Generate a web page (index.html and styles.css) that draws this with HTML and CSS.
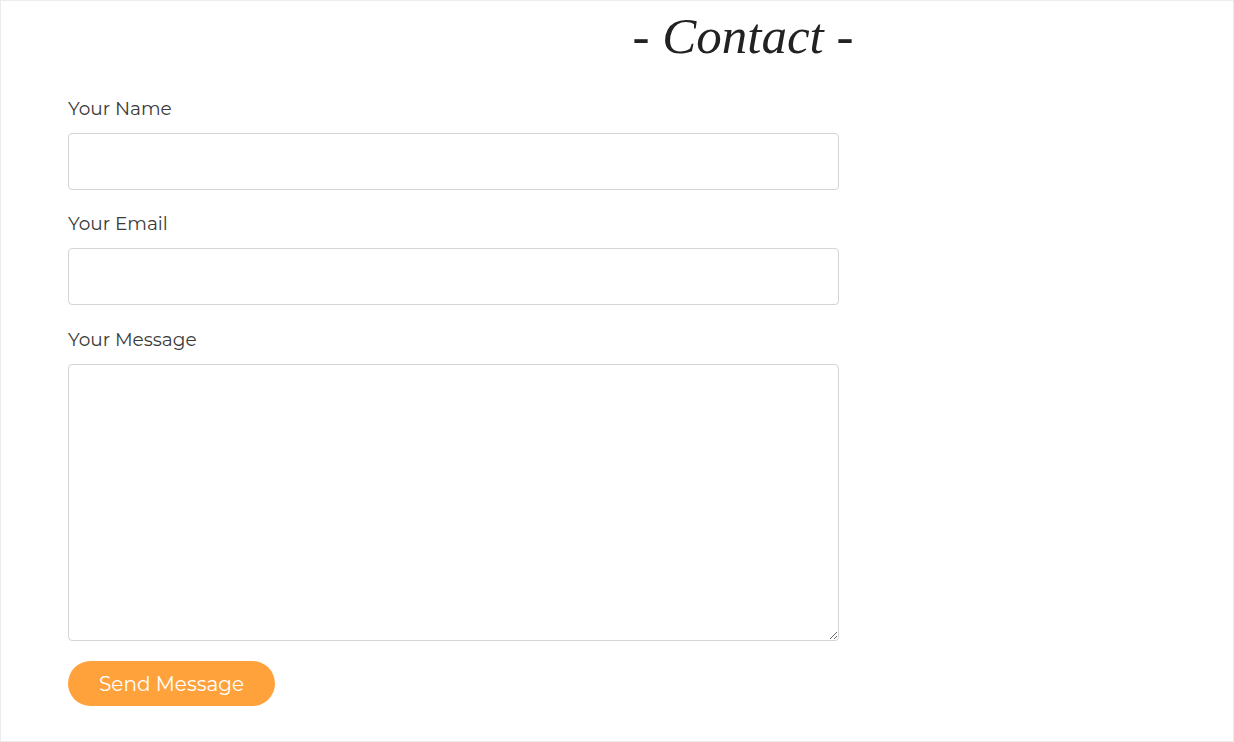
FILE: index.html
```html
<!DOCTYPE html>
<html lang="en">
<head>
<meta charset="utf-8">
<title>Contact</title>
<link rel="stylesheet" href="styles.css">
</head>
<body>
<div class="page">
  <h1 class="title">- Contact -</h1>
  <form class="form">
    <label class="field">
      <span class="label">Your Name</span>
      <input class="input" type="text">
    </label>
    <label class="field">
      <span class="label">Your Email</span>
      <input class="input" type="email">
    </label>
    <label class="field">
      <span class="label">Your Message</span>
      <textarea class="textarea"></textarea>
    </label>
    <button class="btn" type="button">Send Message</button>
  </form>
</div>
</body>
</html>
```
FILE: styles.css
```css
* { box-sizing: border-box; }
html, body { margin: 0; padding: 0; background: #fff; }
.page {
  width: 1234px;
  height: 742px;
  border: 1px solid #ececec;
  font-family: Montserrat, "Open Sans", "Noto Sans", sans-serif;
  color: #333;
  overflow: hidden;
}
.title {
  margin: 0;
  padding: 5px 0 0 252px;
  text-align: center;
  font-family: "Liberation Serif", serif;
  font-style: italic;
  font-weight: normal;
  font-size: 51px;
  line-height: 60px;
  color: #222;
}
.form {
  padding: 31px 0 0 67px;
  width: 838px;
  display: flex;
  flex-direction: column;
}
.field {
  display: flex;
  flex-direction: column;
  margin-bottom: 23px;
}
.field:first-child { margin-bottom: 22px; }
.label {
  font-size: 18.5px;
  line-height: 24px;
  color: #3a3a3a;
  margin-bottom: 12px;
}
.input, .textarea {
  width: 771px;
  border: 1px solid #d4d4d4;
  border-radius: 4px;
  background: #fff;
  font: inherit;
}
.input { height: 57px; }
.textarea { height: 277px; resize: vertical; }
.field:nth-child(3) { margin-bottom: 20px; }
.btn {
  align-self: flex-start;
  width: 207px;
  height: 45px;
  border: none;
  border-radius: 23px;
  background: #ffa23c;
  color: #fff;
  font-family: Montserrat, "Open Sans", "Noto Sans", sans-serif;
  font-size: 20px;
  padding: 0;
}
```
